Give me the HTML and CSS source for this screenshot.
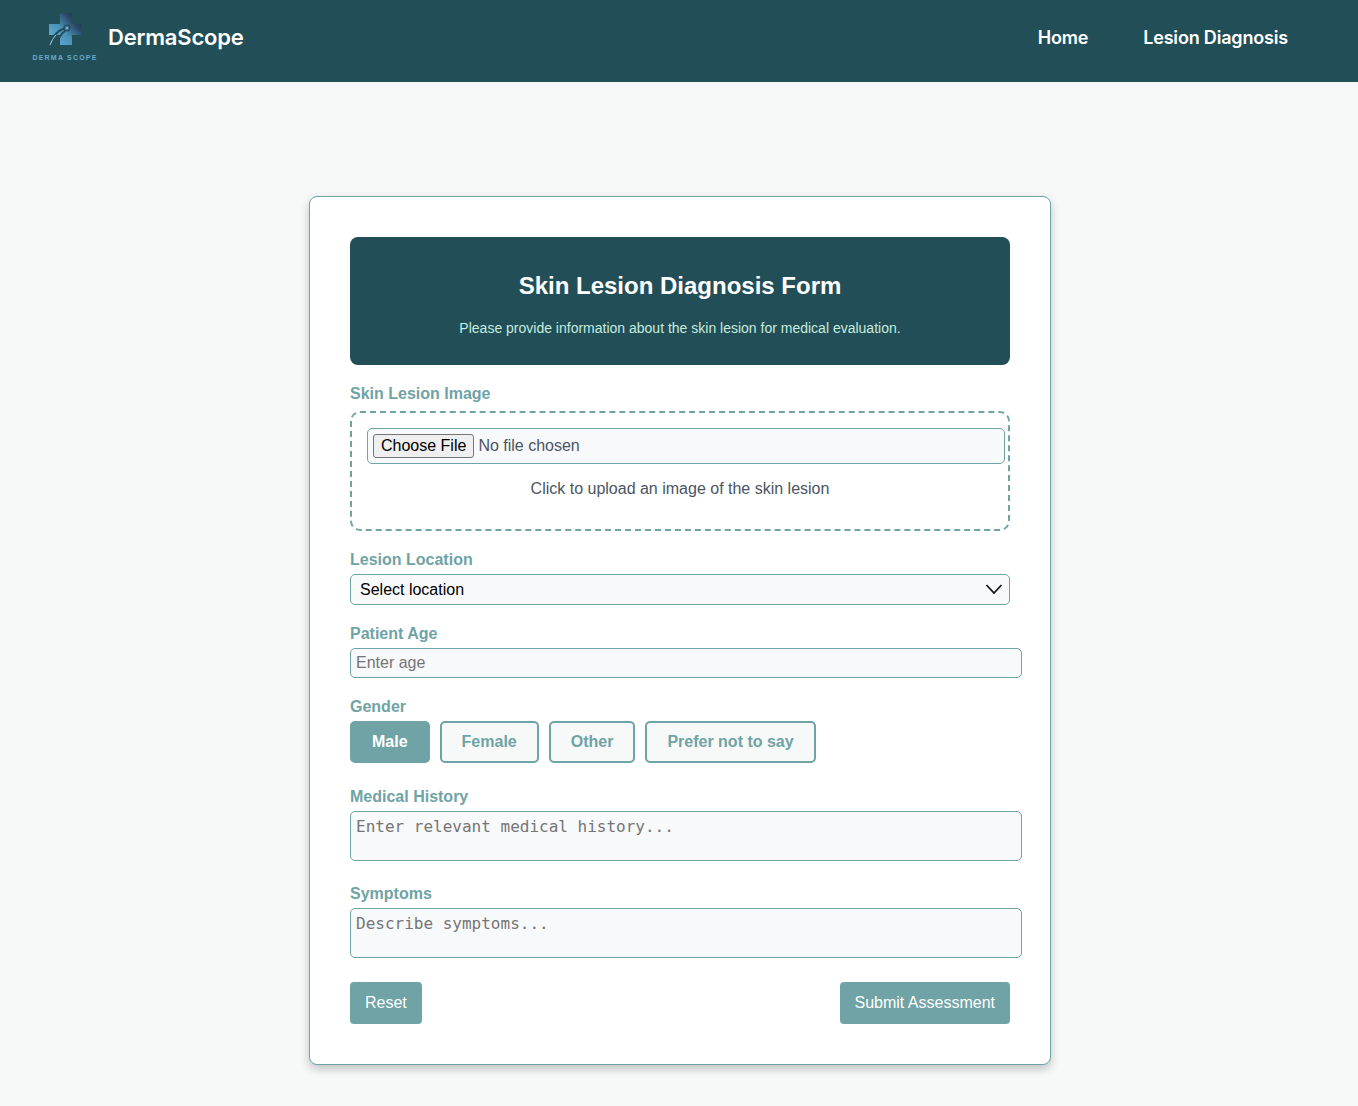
FILE: index.html
```html
<!DOCTYPE html>
<html lang="en">
<head>
<meta charset="utf-8">
<title>DermaScope</title>
<link rel="stylesheet" href="styles.css">
</head>
<body>
<header class="topbar">
  <div class="brand">
    <div class="logo">
      <svg class="logo-mark" width="32" height="32" viewBox="0 0 32 32" aria-hidden="true">
        <defs>
          <linearGradient id="crossFill" x1="0" y1="0.9" x2="0.95" y2="0.05">
            <stop offset="0" stop-color="#62b4de"/>
            <stop offset="0.45" stop-color="#4a8fb4"/>
            <stop offset="0.75" stop-color="#2a4a68"/>
            <stop offset="1" stop-color="#1b2a40"/>
          </linearGradient>
        </defs>
        <path d="M11 1.500Q11 0 12.500 0H21.500Q23 0 23 1.500V11H32V22H23V32H11V22H0V11H11Z" fill="url(#crossFill)"/>
        <path d="M0.500 32Q5 19 15 15.500" fill="none" stroke="#224e58" stroke-width="2"/>
        <path d="M8.500 32Q9 23 16 18" fill="none" stroke="#224e58" stroke-width="1.800"/>
        <path d="M1 32Q3 26 7 22" fill="none" stroke="#b7dcea" stroke-width="0.900"/>
        <circle cx="18" cy="15" r="3" fill="none" stroke="#24465f" stroke-width="1.200"/>
        <circle cx="18" cy="15" r="1" fill="#8fc6dd"/>
      </svg>
      <span class="logo-text">DERMA SCOPE</span>
    </div>
    <span class="brand-name">DermaScope</span>
  </div>
  <nav class="nav">
    <a href="#">Home</a>
    <a href="#">Lesion Diagnosis</a>
  </nav>
</header>
<main class="page">
  <form class="card">
    <div class="banner">
      <h1>Skin Lesion Diagnosis Form</h1>
      <p>Please provide information about the skin lesion for medical evaluation.</p>
    </div>
    <div class="field field-first">
      <label class="label label-upload">Skin Lesion Image</label>
      <div class="dropzone">
        <input class="control file" type="file">
        <p>Click to upload an image of the skin lesion</p>
      </div>
    </div>
    <div class="field">
      <label class="label">Lesion Location</label>
      <div class="select-wrap">
        <select class="select">
          <option>Select location</option>
        </select>
        <svg class="chevron" width="18" height="12" viewBox="0 0 18 12" aria-hidden="true">
          <path d="M1.500 2L9 10L16.500 2" fill="none" stroke="#111" stroke-width="1.700"/>
        </svg>
      </div>
    </div>
    <div class="field">
      <label class="label">Patient Age</label>
      <input class="control age" type="text" placeholder="Enter age">
    </div>
    <div class="field">
      <label class="label">Gender</label>
      <div class="choices">
        <button type="button" class="choice active">Male</button>
        <button type="button" class="choice">Female</button>
        <button type="button" class="choice">Other</button>
        <button type="button" class="choice">Prefer not to say</button>
      </div>
    </div>
    <div class="field field-history">
      <label class="label">Medical History</label>
      <textarea class="control area" placeholder="Enter relevant medical history..."></textarea>
    </div>
    <div class="field field-symptoms">
      <label class="label">Symptoms</label>
      <textarea class="control area" placeholder="Describe symptoms..."></textarea>
    </div>
    <div class="actions">
      <button type="reset" class="action">Reset</button>
      <button type="button" class="action">Submit Assessment</button>
    </div>
  </form>
</main>
</body>
</html>
```
FILE: styles.css
```css
* { margin: 0; }
body {
  margin: 0;
  background: #f7f9f8;
  font-family: "Liberation Sans", Arial, sans-serif;
  font-size: 16px;
}
.topbar {
  height: 82px;
  box-sizing: border-box;
  background: #224e58;
  display: flex;
  justify-content: space-between;
  align-items: flex-start;
  padding: 0 70px 0 30px;
}
.brand { display: flex; align-items: flex-start; }
.logo {
  width: 70px;
  display: flex;
  flex-direction: column;
  align-items: center;
  padding-top: 13px;
}
.logo-mark { display: block; }
.logo-text {
  margin-top: 9px;
  font: 700 7px/8px "Liberation Sans", Arial, sans-serif;
  letter-spacing: 1.2px;
  color: #69aacb;
  white-space: nowrap;
}
.brand-name {
  margin: 23px 0 0 8px;
  font: 600 22px/28px Inter, sans-serif;
  letter-spacing: -0.2px;
  color: #fff;
}
.nav { display: flex; gap: 55px; padding-top: 27px; }
.nav a {
  font: 600 18px/22px Inter, sans-serif;
  letter-spacing: -0.18px;
  color: #fff;
  text-decoration: none;
}
.page { display: flex; justify-content: center; padding: 114px 0 41px 2px; }
.card {
  width: 660px;
  padding: 40px;
  background: #fff;
  border: 1px solid #6fa3a5;
  border-radius: 8px;
  box-shadow: 0 4px 10px rgba(0, 0, 0, 0.22);
}
.banner {
  height: 128px;
  box-sizing: border-box;
  padding-top: 35px;
  background: #224e58;
  border-radius: 8px;
  text-align: center;
}
.banner h1 {
  font-size: 24px;
  line-height: 27px;
  font-weight: 700;
  color: #fff;
}
.banner p {
  margin-top: 21px;
  font-size: 14px;
  line-height: 16px;
  color: #c5ecdd;
}
.field { margin-top: 20px; }
.field-history { margin-top: 25px; }
.field-symptoms { margin-top: 24px; }
.label {
  display: block;
  margin-bottom: 5px;
  font-weight: 700;
  line-height: 18px;
  color: #6fa3a5;
}
.label-upload { margin-bottom: 8px; }
.dropzone {
  padding: 15px;
  border: 2px dashed #6fa3a5;
  border-radius: 10px;
}
.dropzone p { margin: 16px 0; text-align: center; line-height: 18px; color: #4b5563; }
.control {
  display: block;
  box-sizing: content-box;
  width: 100%;
  padding: 5px;
  border: 1px solid #6fa3a5;
  border-radius: 5px;
  background: #f8f9fb;
  font-family: "Liberation Sans", Arial, sans-serif;
  font-size: 16px;
  color: #4b5563;
}
.file { height: 24px; }
.file::file-selector-button {
  height: 24px;
  margin-right: 4px;
  padding: 0 7px;
  background: #efefef;
  border: 1px solid #767676;
  border-radius: 3px;
  font: 16px "Liberation Sans", Arial, sans-serif;
  color: #000;
}
.select-wrap { position: relative; }
.select {
  display: block;
  width: 100%;
  height: 31px;
  padding: 0 9px;
  appearance: none;
  border: 1px solid #6fa3a5;
  border-radius: 5px;
  background: #f8f9fb;
  font: 16px "Liberation Sans", Arial, sans-serif;
  color: #000;
}
.chevron { position: absolute; right: 7px; top: 9px; pointer-events: none; }
.age { height: 18px; }
.age::placeholder, .area::placeholder { color: #757575; opacity: 1; }
.area {
  height: 38px;
  resize: none;
  font-family: "DejaVu Sans Mono", monospace;
  line-height: 19px;
}
.choices { display: flex; gap: 10px; }
.choice {
  height: 42px;
  padding: 0 20px;
  background: #f7f9f8;
  border: 2px solid #6fa3a5;
  border-radius: 5px;
  font: 700 16px "Liberation Sans", Arial, sans-serif;
  color: #6fa3a5;
}
.choice.active { background: #6fa3a5; color: #fff; }
.actions { display: flex; justify-content: space-between; margin-top: 24px; }
.action {
  height: 42px;
  padding: 0 15px;
  border: 0;
  border-radius: 4px;
  background: #6fa3a5;
  font: 16px "Liberation Sans", Arial, sans-serif;
  color: #fff;
}
```
